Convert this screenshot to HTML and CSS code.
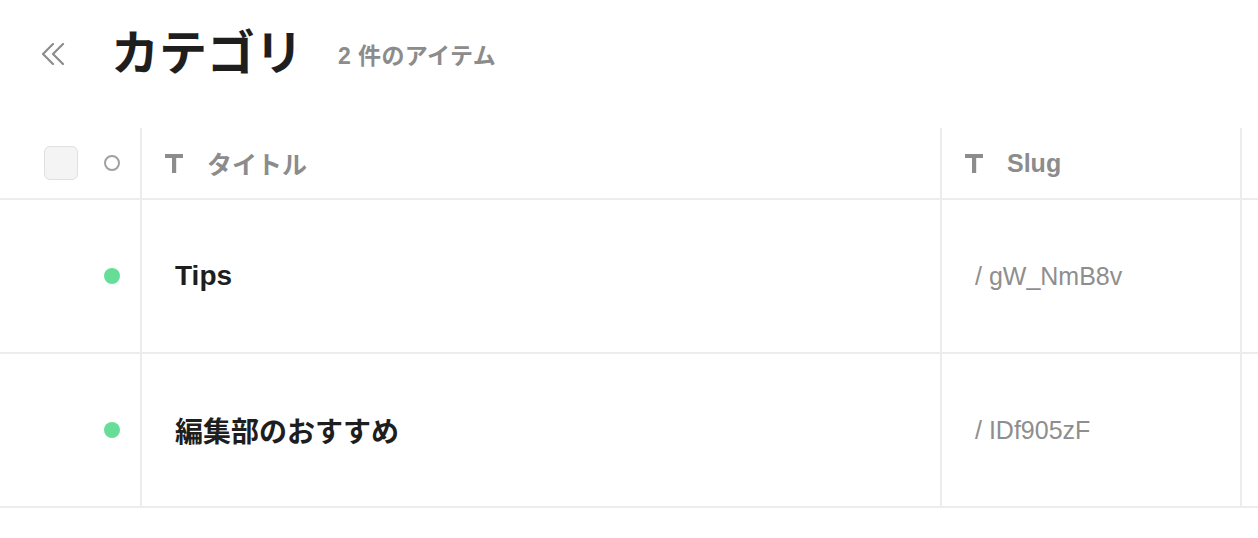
FILE: index.html
```html
<!DOCTYPE html>
<html lang="ja">
<head>
<meta charset="utf-8">
<title>カテゴリ</title>
<link rel="stylesheet" href="styles.css">
</head>
<body>
<header class="page-head">
  <button class="back" aria-label="戻る">
    <svg width="24" height="22" viewBox="0 0 24 22" fill="none" stroke="#8c8c8c" stroke-width="2.2" stroke-linecap="round" stroke-linejoin="round"><path d="M11 1 L1 11 L11 21"/><path d="M21 1 L11 11 L21 21"/></svg>
  </button>
  <h1 class="title">カテゴリ</h1>
  <span class="count">2 件のアイテム</span>
</header>

<div class="table">
  <div class="row head">
    <div class="cell sel">
      <span class="checkbox"></span>
      <span class="status-ring"></span>
    </div>
    <div class="cell col-title">
      <svg class="t-icon" width="18" height="19" viewBox="0 0 18 19"><rect x="0" y="0" width="18" height="4" fill="#8c8c8c"/><rect x="7" y="0" width="4.2" height="19" fill="#8c8c8c"/></svg>
      <span class="head-label">タイトル</span>
    </div>
    <div class="cell col-slug">
      <svg class="t-icon" width="18" height="19" viewBox="0 0 18 19"><rect x="0" y="0" width="18" height="4" fill="#8c8c8c"/><rect x="7" y="0" width="4.2" height="19" fill="#8c8c8c"/></svg>
      <span class="head-label">Slug</span>
    </div>
    <div class="cell rest"></div>
  </div>

  <div class="row item">
    <div class="cell sel body-sel"><span class="dot"></span></div>
    <div class="cell col-title body-title">Tips</div>
    <div class="cell col-slug body-slug">/ gW_NmB8v</div>
    <div class="cell rest"></div>
  </div>

  <div class="row item">
    <div class="cell sel body-sel"><span class="dot"></span></div>
    <div class="cell col-title body-title">編集部のおすすめ</div>
    <div class="cell col-slug body-slug">/ IDf905zF</div>
    <div class="cell rest"></div>
  </div>
</div>
</body>
</html>
```
FILE: styles.css
```css
* { box-sizing: border-box; }
html, body {
  margin: 0;
  padding: 0;
  background: #ffffff;
}
body {
  font-family: "Liberation Sans", "Noto Sans CJK JP", sans-serif;
  color: #1e1e1e;
  width: 1258px;
  overflow: hidden;
}

.page-head {
  display: flex;
  align-items: center;
  height: 108px;
  padding-left: 42px;
}
.back {
  display: flex;
  align-items: center;
  justify-content: center;
  width: 24px;
  height: 22px;
  padding: 0;
  margin: 0 45px 0 0;
  border: 0;
  background: none;
}
.title {
  margin: 0 35px 0 0;
  font-size: 48px;
  line-height: 1;
  font-weight: 700;
  color: #1e1e1e;
}
.count {
  font-size: 23px;
  line-height: 1;
  font-weight: 700;
  color: #8c8c8c;
  letter-spacing: 0.4px;
  padding-top: 4px;
}

.table {
  margin-top: 20px;
}
.row {
  display: grid;
  grid-template-columns: 142px 800px 300px 1fr;
  border-bottom: 2px solid #ececec;
}
.row.head { height: 72px; }
.row.item { height: 154px; }

.cell {
  display: flex;
  align-items: center;
  border-right: 2px solid #ececec;
}
.cell.rest { border-right: 0; }

.sel {
  padding-left: 44px;
  gap: 26px;
}
.checkbox {
  width: 34px;
  height: 34px;
  border-radius: 6px;
  background: #f4f4f4;
  border: 1.5px solid #e0e0e0;
}
.status-ring {
  width: 16px;
  height: 16px;
  border-radius: 50%;
  border: 2px solid #a0a0a0;
}
.body-sel { padding-left: 104px; }
.dot {
  width: 16px;
  height: 16px;
  border-radius: 50%;
  background: #66de97;
}

.col-title, .col-slug {
  padding-left: 23px;
}
.t-icon { flex: none; }
.head-label {
  margin-left: 24px;
  font-size: 25px;
  font-weight: 700;
  color: #8c8c8c;
}

.body-title {
  padding-left: 33px;
  font-size: 28px;
  font-weight: 700;
  color: #1e1e1e;
}
.body-slug {
  padding-left: 33px;
  font-size: 25px;
  color: #8e8e8e;
}
```
